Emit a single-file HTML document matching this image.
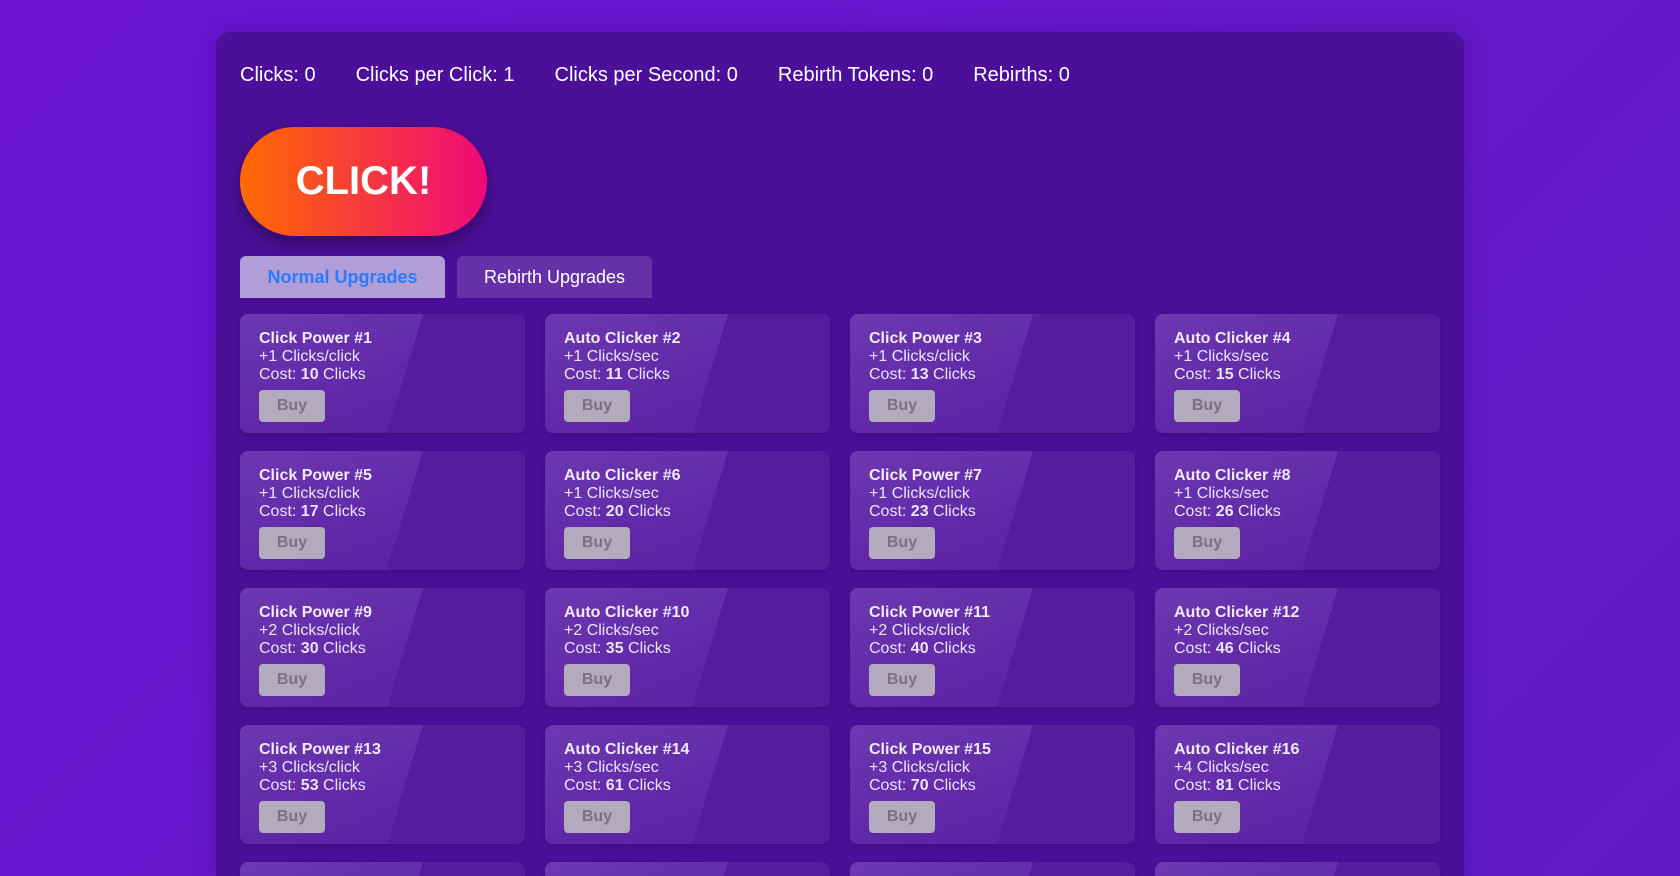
<!DOCTYPE html>
<html><head><meta charset="utf-8"><style>
*{box-sizing:border-box;margin:0;padding:0}
html,body{width:1680px;height:876px;overflow:hidden}
body{background:linear-gradient(135deg,#6a14d2,#6418c8 60%,#5e1bc4);font-family:"Liberation Sans",sans-serif;color:#fff;position:relative}
.wrap{position:absolute;left:216px;top:32px;width:1248px;height:844px;overflow:hidden;background:#4b0f99;border-radius:14px 14px 0 0;padding:0 24px;box-shadow:0 0 20px rgba(0,0,0,.15)}
.stats{position:absolute;top:32px;left:24px;font-size:20px;white-space:nowrap}
.stats span{margin-right:40px}
.click{position:absolute;left:24px;top:95px;width:247px;height:109px;border-radius:55px;background:linear-gradient(90deg,#ff6a00,#ee0979);font-weight:bold;font-size:40px;display:flex;align-items:center;justify-content:center;box-shadow:0 8px 18px rgba(0,0,0,.35)}
.tab{position:absolute;top:224px;height:42px;border-radius:6px 6px 0 0;font-size:18px;display:flex;align-items:center;justify-content:center}
.t1{left:24px;width:205px;background:#b29ed6;color:#2a7bff;font-weight:bold}
.t2{left:241px;width:195px;background:#6530a8;color:#fff}
.grid{position:absolute;left:24px;top:282px;width:1200px;display:grid;grid-template-columns:repeat(4,285px);column-gap:20px;row-gap:18px}
.card{position:relative;height:119px;border-radius:8px;background:#561c9f;overflow:hidden;padding:16px 19px 0;box-shadow:0 2px 6px rgba(0,0,0,.15)}
.card:before{content:"";position:absolute;left:0;top:0;width:183px;height:100%;clip-path:polygon(0 0,183px 0,147px 100%,0 100%);background:linear-gradient(160deg,#6d38b0 0%,#6129a8 60%,#5a22a3 100%)}
.card *{position:relative}
.card h4{font-size:16px;line-height:18px;font-weight:bold;color:#f1eaf8}
.card p{font-size:16px;line-height:18px;color:#ece4f5}
.buy{display:block;margin-top:6px;width:66px;height:32px;border-radius:4px;background:#b3aabd;color:#7a7283;font-weight:bold;font-size:16px;text-align:center;line-height:32px}
</style></head><body>
<div class="wrap">
<div class="stats"><span>Clicks: 0</span><span>Clicks per Click: 1</span><span>Clicks per Second: 0</span><span>Rebirth Tokens: 0</span><span>Rebirths: 0</span></div>
<div class="click">CLICK!</div>
<div class="tab t1">Normal Upgrades</div>
<div class="tab t2">Rebirth Upgrades</div>
<div class="grid">
<div class="card"><h4>Click Power #1</h4><p>+1 Clicks/click</p><p>Cost: <b>10</b> Clicks</p><span class="buy">Buy</span></div>
<div class="card"><h4>Auto Clicker #2</h4><p>+1 Clicks/sec</p><p>Cost: <b>11</b> Clicks</p><span class="buy">Buy</span></div>
<div class="card"><h4>Click Power #3</h4><p>+1 Clicks/click</p><p>Cost: <b>13</b> Clicks</p><span class="buy">Buy</span></div>
<div class="card"><h4>Auto Clicker #4</h4><p>+1 Clicks/sec</p><p>Cost: <b>15</b> Clicks</p><span class="buy">Buy</span></div>
<div class="card"><h4>Click Power #5</h4><p>+1 Clicks/click</p><p>Cost: <b>17</b> Clicks</p><span class="buy">Buy</span></div>
<div class="card"><h4>Auto Clicker #6</h4><p>+1 Clicks/sec</p><p>Cost: <b>20</b> Clicks</p><span class="buy">Buy</span></div>
<div class="card"><h4>Click Power #7</h4><p>+1 Clicks/click</p><p>Cost: <b>23</b> Clicks</p><span class="buy">Buy</span></div>
<div class="card"><h4>Auto Clicker #8</h4><p>+1 Clicks/sec</p><p>Cost: <b>26</b> Clicks</p><span class="buy">Buy</span></div>
<div class="card"><h4>Click Power #9</h4><p>+2 Clicks/click</p><p>Cost: <b>30</b> Clicks</p><span class="buy">Buy</span></div>
<div class="card"><h4>Auto Clicker #10</h4><p>+2 Clicks/sec</p><p>Cost: <b>35</b> Clicks</p><span class="buy">Buy</span></div>
<div class="card"><h4>Click Power #11</h4><p>+2 Clicks/click</p><p>Cost: <b>40</b> Clicks</p><span class="buy">Buy</span></div>
<div class="card"><h4>Auto Clicker #12</h4><p>+2 Clicks/sec</p><p>Cost: <b>46</b> Clicks</p><span class="buy">Buy</span></div>
<div class="card"><h4>Click Power #13</h4><p>+3 Clicks/click</p><p>Cost: <b>53</b> Clicks</p><span class="buy">Buy</span></div>
<div class="card"><h4>Auto Clicker #14</h4><p>+3 Clicks/sec</p><p>Cost: <b>61</b> Clicks</p><span class="buy">Buy</span></div>
<div class="card"><h4>Click Power #15</h4><p>+3 Clicks/click</p><p>Cost: <b>70</b> Clicks</p><span class="buy">Buy</span></div>
<div class="card"><h4>Auto Clicker #16</h4><p>+4 Clicks/sec</p><p>Cost: <b>81</b> Clicks</p><span class="buy">Buy</span></div>
<div class="card"><h4>Click Power #17</h4><p>+4 Clicks/click</p><p>Cost: <b>93</b> Clicks</p><span class="buy">Buy</span></div>
<div class="card"><h4>Auto Clicker #18</h4><p>+4 Clicks/sec</p><p>Cost: <b>107</b> Clicks</p><span class="buy">Buy</span></div>
<div class="card"><h4>Click Power #19</h4><p>+5 Clicks/click</p><p>Cost: <b>123</b> Clicks</p><span class="buy">Buy</span></div>
<div class="card"><h4>Auto Clicker #20</h4><p>+5 Clicks/sec</p><p>Cost: <b>141</b> Clicks</p><span class="buy">Buy</span></div>
</div>
</div>
</body></html>
